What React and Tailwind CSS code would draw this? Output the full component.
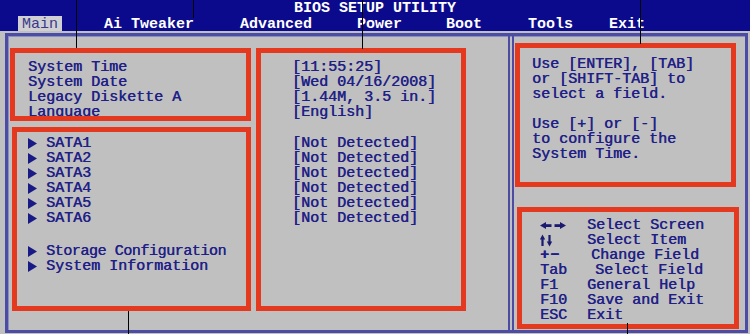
import React from "react";

const RED = "border-[#e4391f]";

function Tri() {
  return (
    <svg width="9" height="11" viewBox="0 0 9 11" className="shrink-0">
      <polygon points="0,0 9,5.5 0,11" fill="#1a1a86" />
    </svg>
  );
}

function LR() {
  return (
    <svg width="26" height="15" viewBox="0 0 26 15">
      <polygon points="0,7.5 6,4 6,11" fill="#1a1a70" />
      <rect x="5" y="6.2" width="6.5" height="2.8" fill="#1a1a70" />
      <rect x="14.5" y="6.2" width="6.5" height="2.8" fill="#1a1a70" />
      <polygon points="26,7.5 20,4 20,11" fill="#1a1a70" />
    </svg>
  );
}

function UD() {
  return (
    <svg width="14" height="15" viewBox="0 0 14 15">
      <polygon points="2.5,1.5 -0.2,6.5 5.2,6.5" fill="#1a1a70" />
      <rect x="1.4" y="5" width="2.2" height="8" fill="#1a1a70" />
      <rect x="8.4" y="2" width="2.2" height="8" fill="#1a1a70" />
      <polygon points="9.5,13.5 6.8,8.5 12.2,8.5" fill="#1a1a70" />
    </svg>
  );
}

const menu = [
  ["Ai Tweaker", "ml-[42px]"],
  ["Advanced", "ml-[46px]"],
  ["Power", "ml-[45px]"],
  ["Boot", "ml-[44px]"],
  ["Tools", "ml-[46px]"],
  ["Exit", "ml-[36px]"],
];

const keys = [
  [<LR />, "Select Screen", ""],
  [<UD />, "Select Item", ""],
  [<span className="font-bold tracking-[1px]">+−</span>, "Change Field", "ml-[4px]"],
  ["Tab", "Select Field", "ml-[8px]"],
  ["F1", "General Help", ""],
  ["F10", "Save and Exit", ""],
  ["ESC", "Exit", ""],
];

export default function App() {
  return (
    <div className="relative w-[750px] h-[334px] overflow-hidden bg-[#c0c0c0] font-['Liberation_Mono','Courier_New',monospace] text-[15px] leading-[15px] text-[#1f1f87] [text-shadow:0.4px_0_0_#1f1f87]">
      {/* header */}
      <div className="h-[31px] bg-[#0c0a8c] text-white font-bold [text-shadow:none]">
        <div className="h-[16px] pt-[1px] flex justify-center">BIOS SETUP UTILITY</div>
        <div className="flex h-[15px] leading-[15px]">
          <div className="ml-[18px] w-[44px] pl-[4px] pt-[1px] bg-[#cfcfd4] text-[#3a3a8a] font-normal">Main</div>
          {menu.map(([t, c]) => (
            <div key={t} className={`${c} pt-[1px]`}>{t}</div>
          ))}
        </div>
      </div>

      {/* frame */}
      <div className="mt-[2px] ml-[5px] w-[743px] h-[300px] border-[3px] border-[#4c4ca4] shadow-[inset_1px_1px_0_#8c8cc4] flex">
        {/* left */}
        <div className="w-[500px] flex pt-[12px] pl-[2px]">
          <div className="w-[241px] flex flex-col">
            <div className={`h-[73px] border-[5px] ${RED} overflow-hidden pt-[7px] pl-[13px]`}>
              <div>System Time</div>
              <div>System Date</div>
              <div>Legacy Diskette A</div>
              <div>Language</div>
            </div>
            <div className={`mt-[6px] ml-[2px] w-[239px] h-[184px] border-[5px] ${RED} pt-[4px] pl-[11px]`}>
              {["SATA1", "SATA2", "SATA3", "SATA4", "SATA5", "SATA6"].map((s) => (
                <div key={s} className="flex items-center h-[15px]">
                  <Tri />
                  <span className="ml-[9px]">{s}</span>
                </div>
              ))}
              <div className="flex items-center h-[15px] mt-[18px]">
                <Tri />
                <span className="ml-[9px] tracking-[-0.43px]">Storage Configuration</span>
              </div>
              <div className="flex items-center h-[15px]">
                <Tri />
                <span className="ml-[9px]">System Information</span>
              </div>
            </div>
          </div>
          <div className={`ml-[5px] w-[210px] h-[263px] border-[5px] ${RED} pt-[7px] pl-[31px]`}>
            <div>[11:55:25]</div>
            <div>[Wed 04/16/2008]</div>
            <div>[1.44M, 3.5 in.]</div>
            <div>[English]</div>
            <div className="mt-[16px]">[Not Detected]</div>
            <div>[Not Detected]</div>
            <div>[Not Detected]</div>
            <div>[Not Detected]</div>
            <div>[Not Detected]</div>
            <div>[Not Detected]</div>
          </div>
        </div>

        {/* divider */}
        <div className="w-[6px] border-x-2 border-[#4c4ca4]" />

        {/* right */}
        <div className="flex-1 flex flex-col">
          <div className={`mt-[7px] ml-[1px] w-[221px] h-[144px] border-[5px] ${RED} pt-[9px] pl-[12px]`}>
            <div>Use [ENTER], [TAB]</div>
            <div>or [SHIFT-TAB] to</div>
            <div>select a field.</div>
            <div className="mt-[15px]">Use [+] or [-]</div>
            <div>to configure the</div>
            <div>System Time.</div>
          </div>
          <div className={`mt-[20px] ml-[3px] w-[222px] h-[122px] border-[5px] ${RED} pt-[6px] pl-[18px]`}>
            {keys.map(([k, d, c], i) => (
              <div key={i} className="flex h-[15px] items-center">
                <div className="w-[47px] flex items-center">{k}</div>
                <div className={c}>{d}</div>
              </div>
            ))}
          </div>
        </div>
      </div>

      {/* annotation lines */}
      <div className="absolute left-[76px] top-0 w-px h-[48px] bg-black" />
      <div className="absolute left-[193px] top-0 w-px h-[18px] bg-black" />
      <div className="absolute left-[362px] top-0 w-px h-[49px] bg-black" />
      <div className="absolute left-[640px] top-0 w-px h-[44px] bg-black" />
      <div className="absolute left-[128px] top-[311px] w-px h-[23px] bg-black" />
      <div className="absolute left-[627px] top-[323px] w-px h-[11px] bg-black" />
    </div>
  );
}
